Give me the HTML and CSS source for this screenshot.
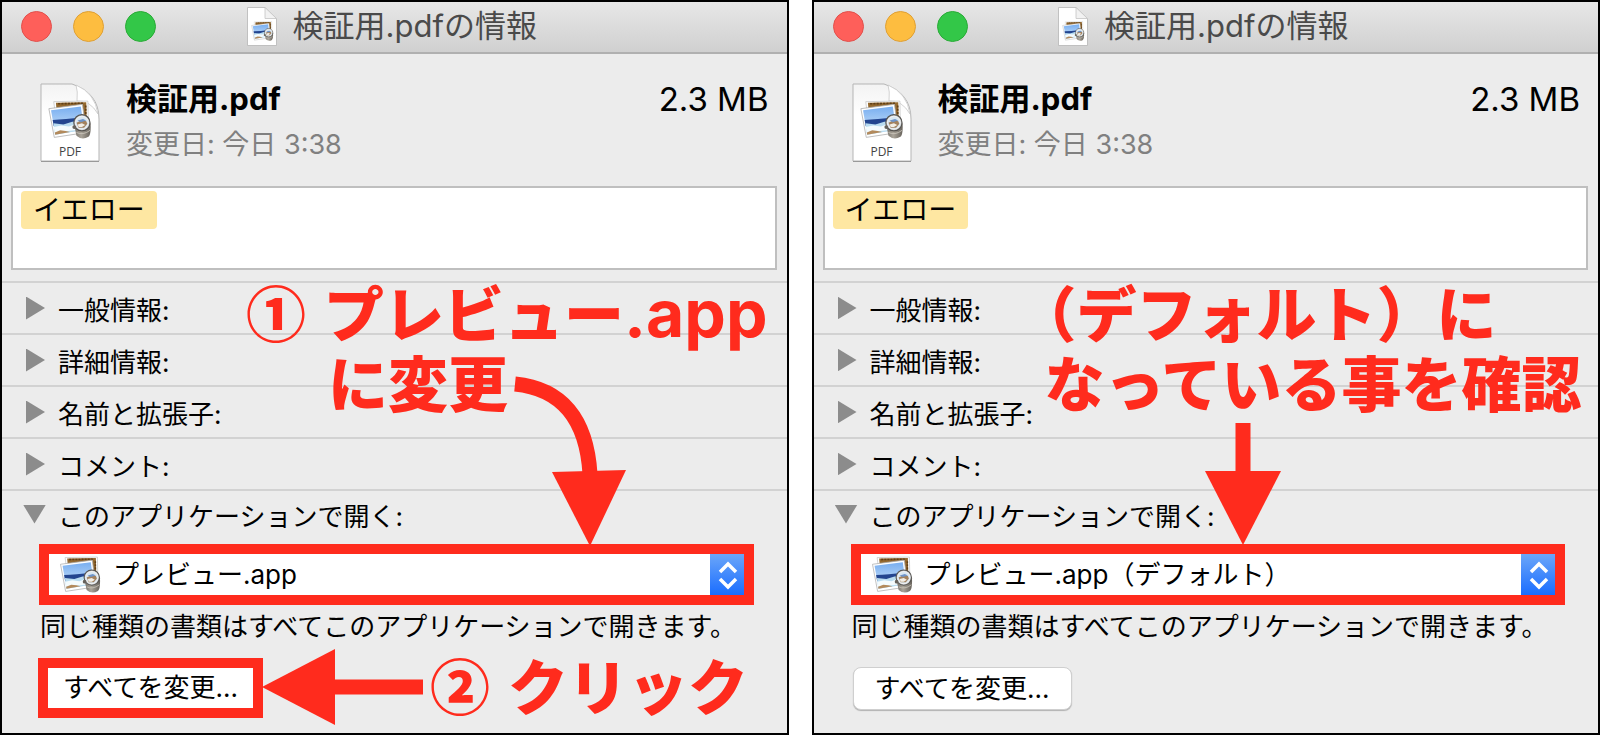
FILE: index.html
```html
<!DOCTYPE html>
<html lang="ja">
<head>
    <meta charset="UTF-8">
    <meta name="viewport" content="width=device-width, initial-scale=1.0">
    <title>検証用.pdfの情報</title>
    <link rel="stylesheet" href="styles.css">
</head>
<body>
    <svg width="0" height="0" class="defs" aria-hidden="true">
        <defs>
            <linearGradient id="sky" x1="0" y1="0" x2="0" y2="1">
                <stop offset="0" stop-color="#78aef0"/>
                <stop offset="1" stop-color="#d3e8fb"/>
            </linearGradient>
            <linearGradient id="metal" x1="0" y1="0" x2="1" y2="0">
                <stop offset="0" stop-color="#77736c"/>
                <stop offset="0.4" stop-color="#aaa499"/>
                <stop offset="1" stop-color="#67625b"/>
            </linearGradient>
            <linearGradient id="paper" x1="0" y1="0" x2="0" y2="1">
                <stop offset="0" stop-color="#f3f3f3"/>
                <stop offset="0.4" stop-color="#ffffff"/>
            </linearGradient>
        </defs>

        <!-- photo with loupe -->
        <symbol id="preview" viewBox="0 0 40 36">
            <path d="M5 1.500L36.500 1L37 25L8 26Z" fill="#fff" stroke="#bbb" stroke-width="0.6"/>
            <path d="M7 2.500L35 2L35.500 23L9 24Z" fill="#94692f"/>
            <path d="M9 3.500L33 3M34.500 5V20" stroke="#5f3f18" stroke-width="1.500" stroke-dasharray="2 1"/>
            <path d="M0.500 8L31.500 4L35 30L5.500 34.500Z" fill="#fff" stroke="#aaa" stroke-width="0.7"/>
            <path d="M2.500 9.500L30 6L33 27.500L6.300 32Z" fill="url(#sky)"/>
            <path d="M4 18.500Q15 18 31.500 16L32.200 21L5 24Z" fill="#23458f"/>
            <path d="M4.800 21.500L14 22.500L22 20L32 20L33 27.500L6.300 32Z" fill="#b9dcf0"/>
            <path d="M5 25L12 23.500L19 24.500L26 22L32.300 24L32.600 27L6 30Z" fill="#f4fbfd"/>
            <path d="M6 30L11 28L16 28.500L20 29.500L6.300 32Z" fill="#b38a5c"/>
            <path d="M24.500 26L26 33Q31 37.500 37 34Q39.500 32 39 22L37 19Z" fill="url(#metal)"/>
            <path d="M26 30Q32 33 38.500 28" fill="none" stroke="#c9c4b9" stroke-width="0.8"/>
            <circle cx="31" cy="21" r="7.500" fill="#b8bdc0" stroke="#55534f" stroke-width="1"/>
            <circle cx="31" cy="21" r="6" fill="#d8e7f2" stroke="#f1f1f1" stroke-width="1"/>
            <path d="M26 21L31 18.500L35 19.500L36 22L33 25.500H28Z" fill="#a3825e"/>
            <path d="M27 19L32 17.500L35 19L30 20.500Z" fill="#6f94c8"/>
            <path d="M27 22.500L31 21.500L34 23L31 25H28Z" fill="#f2eee6"/>
            <circle cx="24" cy="25" r="1.800" fill="#66625c"/>
        </symbol>

        <symbol id="sheet" viewBox="0 0 60 80">
            <path d="M1 1H32Q59 10 59 36V78H1Z" fill="url(#paper)" stroke="#b5b5b5"/>
            <path d="M36 2Q38 8 37 18Q50 17 58 31Q55 10 36 2Z" fill="#fff" stroke="#c8c8c8" stroke-width="0.8"/>
            <path d="M1 78.500H59" stroke="#999"/>
            <use href="#preview" x="8" y="17" width="44" height="39"/>
        </symbol>

        <symbol id="sheet-small" viewBox="0 0 30 39">
            <path d="M0.500 0.500H18L29.500 12V38.500H0.500Z" fill="#fff" stroke="#b5b5b5" stroke-width="0.800"/>
            <path d="M18 0.500V11.500H29.500Z" fill="#f2f2f2" stroke="#c4c4c4" stroke-width="0.800"/>
            <use href="#preview" x="4" y="14" width="23" height="20"/>
        </symbol>
    </svg>

    <main class="windows">
        <section class="window">
            <header class="titlebar">
                <div class="lights">
                    <button class="light close" aria-label="閉じる"></button>
                    <button class="light minimize" aria-label="しまう"></button>
                    <button class="light zoom" aria-label="拡大"></button>
                </div>
                <h1 class="title">
                    <svg class="title-icon"><use href="#sheet-small"/></svg>
                    検証用.pdfの情報
                </h1>
            </header>

            <div class="file">
                <div class="file-icon">
                    <svg class="file-sheet"><use href="#sheet"/></svg>
                    <span class="file-type">PDF</span>
                </div>
                <div class="file-text">
                    <h2 class="file-name">検証用.pdf</h2>
                    <p class="file-date">変更日: 今日 3:38</p>
                </div>
                <p class="file-size">2.3 MB</p>
            </div>

            <div class="tags"><span class="tag">イエロー</span></div>

            <details class="row"><summary>一般情報:</summary></details>
            <details class="row"><summary>詳細情報:</summary></details>
            <details class="row"><summary>名前と拡張子:</summary></details>
            <details class="row"><summary>コメント:</summary></details>
            <details class="row" open>
                <summary>このアプリケーションで開く:</summary>
                <div class="open-with">
                    <div class="popup">
                        <svg class="popup-icon"><use href="#preview"/></svg>
                        <select class="popup-select" aria-label="このアプリケーションで開く">
                            <option>プレビュー.app</option>
                        </select>
                        <span class="popup-arrows">
                            <svg viewBox="0 0 34 41"><path d="M10 18L18 10L26 18M10 25L18 33L26 25"/></svg>
                        </span>
                    </div>
                    <p class="hint">同じ種類の書類はすべてこのアプリケーションで開きます。</p>
                    <button class="change marked">すべてを変更...</button>
                </div>
            </details>

            <p class="note note-change"><span class="num">①</span> プレビュー<span class="ext">.app</span><br><span class="note-second">に変更</span></p>
            <p class="note note-click"><span class="num">②</span> クリック</p>
            <svg class="arrow arrow-curve" viewBox="0 0 114 170">
                <path class="shaft" d="M3 8Q73 15 78 98"/>
                <path class="head" d="M40 96L114 94L78 170Z"/>
            </svg>
            <svg class="arrow arrow-left" viewBox="0 0 161 76">
                <path class="shaft" d="M70 38H161"/>
                <path class="head" d="M0 38L73 0V76Z"/>
            </svg>
        </section>

        <section class="window">
            <header class="titlebar">
                <div class="lights">
                    <button class="light close" aria-label="閉じる"></button>
                    <button class="light minimize" aria-label="しまう"></button>
                    <button class="light zoom" aria-label="拡大"></button>
                </div>
                <h1 class="title">
                    <svg class="title-icon"><use href="#sheet-small"/></svg>
                    検証用.pdfの情報
                </h1>
            </header>

            <div class="file">
                <div class="file-icon">
                    <svg class="file-sheet"><use href="#sheet"/></svg>
                    <span class="file-type">PDF</span>
                </div>
                <div class="file-text">
                    <h2 class="file-name">検証用.pdf</h2>
                    <p class="file-date">変更日: 今日 3:38</p>
                </div>
                <p class="file-size">2.3 MB</p>
            </div>

            <div class="tags"><span class="tag">イエロー</span></div>

            <details class="row"><summary>一般情報:</summary></details>
            <details class="row"><summary>詳細情報:</summary></details>
            <details class="row"><summary>名前と拡張子:</summary></details>
            <details class="row"><summary>コメント:</summary></details>
            <details class="row" open>
                <summary>このアプリケーションで開く:</summary>
                <div class="open-with">
                    <div class="popup">
                        <svg class="popup-icon"><use href="#preview"/></svg>
                        <select class="popup-select" aria-label="このアプリケーションで開く">
                            <option>プレビュー.app（デフォルト）</option>
                        </select>
                        <span class="popup-arrows">
                            <svg viewBox="0 0 34 41"><path d="M10 18L18 10L26 18M10 25L18 33L26 25"/></svg>
                        </span>
                    </div>
                    <p class="hint">同じ種類の書類はすべてこのアプリケーションで開きます。</p>
                    <button class="change">すべてを変更...</button>
                </div>
            </details>

            <p class="note note-default">（デフォルト）に<br>なっている事を確認</p>
            <svg class="arrow arrow-down" viewBox="0 0 76 122">
                <path class="shaft" d="M38 0V50"/>
                <path class="head" d="M0 48H76L38 122Z"/>
            </svg>
        </section>
    </main>
</body>
</html>
```
FILE: styles.css
```css
* {
    box-sizing: border-box;
}

body {
    margin: 0;
    background-color: white;
    color: black;
    font-family: Inter, "Noto Sans CJK JP", sans-serif;
    font-size: 26px;
}

h1, h2, p {
    margin: 0;
    font-weight: normal;
}

.defs {
    position: absolute;
}

.windows {
    display: grid;
    grid-template-columns: 1fr 1fr;
    gap: 23px;
    min-height: 100vh;
}

.window {
    position: relative; /* holds the red notes */
    border: 2px solid black;
    background-color: #ececec;
}

/* title bar */
.titlebar {
    display: grid;
    grid-template-columns: 1fr auto 1fr;
    align-items: center;
    height: 52px;
    padding: 0 24px 2px 19px;
    background: linear-gradient(#e7e7e7, #d0d0d0);
    border-bottom: 2px solid #b0b0b0;
}

.lights {
    display: flex;
    gap: 21px;
}

.light {
    width: 31px;
    height: 31px;
    padding: 0;
    border-radius: 50%;
    border: 1px solid;
}

.close {
    background-color: #fe5f5a;
    border-color: #e2504c;
}

.minimize {
    background-color: #fdbd40;
    border-color: #dfa035;
}

.zoom {
    background-color: #33c748;
    border-color: #2aab37;
}

.title {
    display: flex;
    align-items: center;
    gap: 16px;
    font-size: 31px;
    line-height: 40px;
    color: #4a4a4a;
}

.title-icon {
    width: 30px;
    height: 39px;
}

/* file summary */
.file {
    display: flex;
    padding: 27px 18px 23px 38px;
}

.file-icon {
    position: relative;
    width: 60px;
    height: 80px;
    margin: 2px 26px 0 0;
}

.file-sheet {
    display: block;
    width: 60px;
    height: 80px;
}

.file-type {
    position: absolute;
    left: 0;
    right: 0;
    bottom: 3px;
    text-align: center;
    font-family: "Open Sans", sans-serif;
    font-size: 12px;
    line-height: 16px;
    color: #444;
}

.file-text {
    flex: 1;
}

.file-name {
    font-size: 31px;
    line-height: 36px;
    font-weight: bold;
}

.file-date {
    margin-top: 10px;
    font-size: 27px;
    line-height: 36px;
    color: #808080;
}

.file-size {
    font-size: 33px;
    line-height: 36px;
}

.tags {
    display: flex;
    align-items: flex-start;
    height: 84px;
    margin: 0 10px 11px 9px;
    padding: 3px 8px;
    background-color: white;
    border: 2px solid #bfbfbf;
}

.tag {
    padding: 0 12px;
    border-radius: 4px;
    background-color: #fee7a2;
    font-size: 28px;
    line-height: 38px;
}

/* disclosure rows */
.row {
    border-top: 2px solid #d2d2d2;
}

.row summary {
    display: flex;
    align-items: center;
    height: 50px;
    padding-left: 24px;
    list-style: none;
}

.row summary::before {
    content: "";
    width: 19px;
    height: 23px;
    margin-right: 13px;
    background-color: #8c8c8c;
    clip-path: polygon(0 0, 100% 50%, 0 100%);
}

.row[open] summary {
    height: 46px;
    padding-left: 21px;
}

.row[open] summary::before {
    width: 23px;
    height: 19px;
    margin-right: 12px;
    clip-path: polygon(0 0, 100% 0, 50% 100%);
}

.open-with {
    padding: 7px 33px 14px 37px;
}

.popup {
    display: flex;
    align-items: center;
    height: 61px;
    padding-left: 11px;
    background-color: white;
    border: 10px solid #ff2b1d;
}

.popup-icon {
    width: 41px;
    height: 37px;
}

.popup-select {
    flex: 1;
    min-width: 0;
    height: 41px;
    padding: 0 0 0 12px;
    border: none;
    appearance: none;
    background: transparent;
    color: black;
    font: inherit;
}

.popup-arrows {
    width: 34px;
    height: 41px;
    background: linear-gradient(#6ba6f9, #1a6dff);
}

.popup-arrows svg {
    display: block;
    fill: none;
    stroke: white;
    stroke-width: 3.5;
}

.hint {
    margin: 2px 0 20px 1px;
    line-height: 40px;
    white-space: nowrap;
}

.change {
    display: block;
    height: 43px;
    margin-left: 2px;
    padding: 0 21px;
    border: 1px solid #cfcfcf;
    border-radius: 8px;
    background-color: white;
    box-shadow: 0 1px 1px rgba(0, 0, 0, 0.25);
    color: black;
    font: inherit;
    line-height: 36px;
}

.marked {
    height: 60px;
    margin: -9px 0 0 -1px;
    padding: 0 15px;
    border: 10px solid #ff2b1d;
    border-radius: 0;
    box-shadow: none;
}

/* red notes over the windows */
.note {
    position: absolute;
    color: #ff2b1d;
    font-size: 60px;
    font-weight: 900;
    line-height: 70px;
    white-space: nowrap;
}

.num {
    margin-right: 6px;
    font-family: "Noto Sans CJK JP", sans-serif;
}

.ext {
    font-size: 66px;
    font-weight: bold;
}

.note-change {
    left: 244px;
    top: 274px;
}

.note-second {
    padding-left: 82px;
}

.note-click {
    left: 428px;
    top: 647px;
}

.note-default {
    left: 231px;
    top: 278px;
    text-indent: -28px;
}

.arrow {
    position: absolute;
}

.arrow .shaft {
    fill: none;
    stroke: #ff2b1d;
    stroke-width: 15;
}

.arrow .head {
    fill: #ff2b1d;
}

.arrow-curve {
    left: 510px;
    top: 374px;
    width: 114px;
    height: 170px;
}

.arrow-left {
    left: 260px;
    top: 647px;
    width: 161px;
    height: 76px;
}

.arrow-down {
    left: 391px;
    top: 421px;
    width: 76px;
    height: 122px;
}
```
